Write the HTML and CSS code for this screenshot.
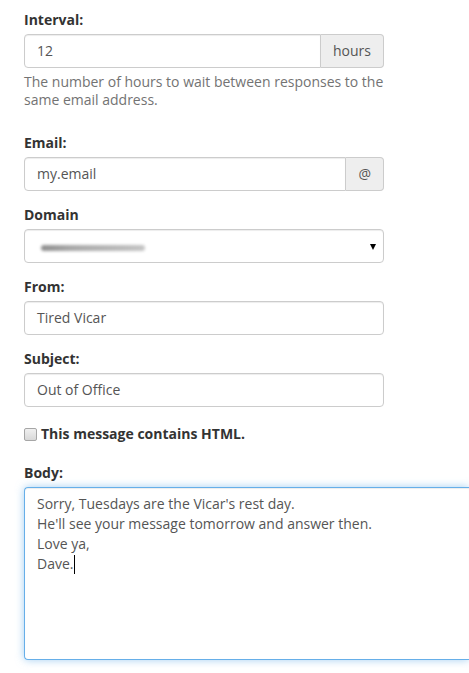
FILE: index.html
```html
<!DOCTYPE html>
<html>
<head>
<meta charset="utf-8">
<link rel="stylesheet" href="styles.css">
</head>
<body>
<form class="form">
  <div class="group group-help">
    <label class="label">Interval:</label>
    <div class="input-group">
      <div class="control grow">12</div>
      <span class="addon">hours</span>
    </div>
    <p class="help">The number of hours to wait between responses to the same email address.</p>
  </div>

  <div class="group">
    <label class="label">Email:</label>
    <div class="input-group">
      <div class="control grow">my.email</div>
      <span class="addon">@</span>
    </div>
  </div>

  <div class="group">
    <label class="label">Domain</label>
    <div class="control select">
      <span class="blur"></span>
      <span class="caret"></span>
    </div>
  </div>

  <div class="group">
    <label class="label">From:</label>
    <div class="control">Tired Vicar</div>
  </div>

  <div class="group">
    <label class="label">Subject:</label>
    <div class="control">Out of Office</div>
  </div>

  <div class="check-row">
    <input type="checkbox" class="check">
    <span class="check-text">This message contains HTML.</span>
  </div>

  <div class="group">
    <label class="label">Body:</label>
    <div class="textarea">
      <div>Sorry, Tuesdays are the Vicar's rest day.</div>
      <div>He'll see your message tomorrow and answer then.</div>
      <div>Love ya,</div>
      <div>Dave.<span class="cursor"></span></div>
    </div>
  </div>
</form>
</body>
</html>
```

FILE: styles.css
```css
* { box-sizing: border-box; }
html, body { margin: 0; padding: 0; background: #fff; }
body {
  font-family: "Open Sans", "DejaVu Sans", sans-serif;
  font-size: 14px;
  line-height: 20px;
  color: #333;
  overflow: hidden;
  width: 469px;
  height: 673px;
}
.form {
  padding: 10px 0 0 24px;
  display: flex;
  flex-direction: column;
}
.group { margin-bottom: 14px; width: 360px; }
.group-help { margin-bottom: 24px; }
.label {
  display: block;
  font-weight: 700;
  margin-bottom: 4px;
  line-height: 20px;
}
.input-group { display: flex; }
.control {
  height: 34px;
  padding: 6px 12px;
  border: 1px solid #ccc;
  border-radius: 4px;
  color: #555;
  background: #fff;
  line-height: 20px;
  box-shadow: inset 0 1px 1px rgba(0,0,0,0.075);
}
.grow {
  flex: 1;
  border-top-right-radius: 0;
  border-bottom-right-radius: 0;
}
.addon {
  height: 34px;
  padding: 6px 12px;
  background: #eee;
  border: 1px solid #ccc;
  border-left: 0;
  border-radius: 0 4px 4px 0;
  color: #555;
  line-height: 20px;
  text-align: center;
}
.help {
  margin: 5px 0 0 0;
  color: #737373;
  line-height: 18px;
}
.select {
  display: flex;
  align-items: center;
  justify-content: space-between;
  padding-left: 16px;
  padding-right: 7px;
}
.blur {
  width: 104px;
  height: 6px;
  margin-top: 3px;
  background: linear-gradient(90deg, #8f8f8f 0%, #a8a8a8 30%, #b4b4b4 60%, #c4c4c4 100%);
  filter: blur(1.5px);
  border-radius: 3px;
}
.caret {
  width: 0;
  height: 0;
  border-left: 3px solid transparent;
  border-right: 3px solid transparent;
  border-top: 6px solid #000;
  margin-top: 1px;
}
.check-row {
  display: flex;
  align-items: center;
  gap: 4px;
  margin: 3px 0 19px 0;
  height: 20px;
}
.check {
  -webkit-appearance: none;
  appearance: none;
  width: 13px;
  height: 13px;
  margin: 0;
  border: 1px solid #a6a6a6;
  border-radius: 2px;
  background: linear-gradient(#f0f0f0, #d8d8d8);
}
.check-text { font-weight: 700; }
.textarea {
  width: 445px;
  height: 173px;
  padding: 6px 12px;
  border: 1px solid #66afe9;
  border-right: 0;
  border-radius: 4px 0 0 4px;
  color: #555;
  line-height: 20px;
  box-shadow: inset 0 1px 1px rgba(0,0,0,0.075), 0 0 8px rgba(102,175,233,0.6);
}
.cursor {
  display: inline-block;
  width: 1px;
  height: 19px;
  background: #000;
  vertical-align: -5px;
  margin-left: 1px;
}
```
